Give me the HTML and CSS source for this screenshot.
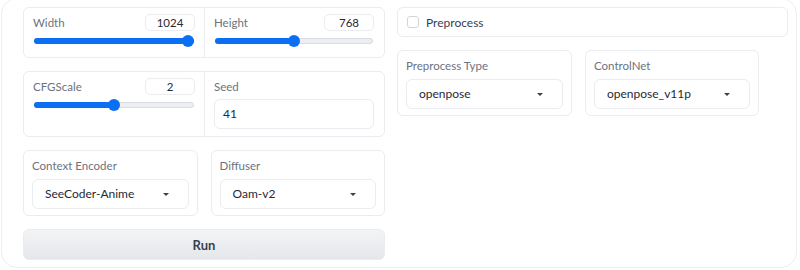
FILE: index.html
```html
<!DOCTYPE html>
<html lang="en">
<head>
<meta charset="UTF-8">
<meta name="viewport" content="width=device-width, initial-scale=1.0">
<title>SeeCoder</title>
<link rel="stylesheet" href="styles.css">
</head>
<body>

<div class="app">
    <div class="left">
        <div class="panel split">
            <div class="field">
                <div class="head">
                    <span class="label">Width</span>
                    <span class="num">1024</span>
                </div>
                <div class="slider">
                    <div class="fill" style="width:100%"></div>
                    <div class="thumb" style="left:100%"></div>
                </div>
            </div>
            <div class="field">
                <div class="head">
                    <span class="label">Height</span>
                    <span class="num">768</span>
                </div>
                <div class="slider">
                    <div class="fill" style="width:50%"></div>
                    <div class="thumb" style="left:50%"></div>
                </div>
            </div>
        </div>

        <div class="panel split">
            <div class="field">
                <div class="head">
                    <span class="label">CFGScale</span>
                    <span class="num">2</span>
                </div>
                <div class="slider">
                    <div class="fill" style="width:50%"></div>
                    <div class="thumb" style="left:50%"></div>
                </div>
            </div>
            <div class="field">
                <div class="head">
                    <span class="label">Seed</span>
                </div>
                <div class="textbox">41</div>
            </div>
        </div>

        <div class="pair">
            <div class="panel drop-panel">
                <div class="label">Context Encoder</div>
                <div class="dropdown">SeeCoder-Anime <span class="caret"></span></div>
            </div>
            <div class="panel drop-panel">
                <div class="label">Diffuser</div>
                <div class="dropdown">Oam-v2 <span class="caret"></span></div>
            </div>
        </div>

        <button class="run">Run</button>
    </div>

    <div class="right">
        <div class="panel check-panel">
            <span class="box"></span>
            <span class="check-label">Preprocess</span>
        </div>
        <div class="pair pair-right">
            <div class="panel drop-panel">
                <div class="label">Preprocess Type</div>
                <div class="dropdown">openpose <span class="caret"></span></div>
            </div>
            <div class="panel drop-panel">
                <div class="label">ControlNet</div>
                <div class="dropdown">openpose_v11p <span class="caret"></span></div>
            </div>
        </div>
    </div>
</div>

</body>
</html>
```

FILE: styles.css
```css
body {
    font-family: Lato, "Open Sans", sans-serif;
    margin: 0;
    padding: 0;
    background: #fff;
    overflow: hidden;
}
.app {
    box-sizing: border-box;
    height: 270px;
    margin: -2px 3px 0 1px;
    padding: 8px 8px 0 21px;
    border: 1px solid #eeeeee;
    border-radius: 16px;
    display: grid;
    grid-template-columns: 362px 1fr;
    column-gap: 12px;
    align-items: start;
}
.left,
.right {
    display: flex;
    flex-direction: column;
    gap: 13px;
}
.panel {
    box-sizing: border-box;
    border: 1px solid #eaecef;
    border-radius: 6px;
    background: #fff;
}
.split {
    display: grid;
    grid-template-columns: 1fr 1fr;
}
.split .field + .field {
    border-left: 1px solid #eaecef;
}
.field {
    padding: 6px 10px 10px 9px;
}
.split .field:first-child {
    padding-right: 9px;
}
.head {
    display: flex;
    justify-content: space-between;
    align-items: center;
    height: 17px;
}
.label {
    font-size: 11.5px;
    color: #6b7280;
    line-height: 17px;
}
.num {
    box-sizing: border-box;
    width: 50px;
    height: 17px;
    border: 1px solid #eaecef;
    border-radius: 5px;
    font-size: 11.5px;
    line-height: 15px;
    text-align: center;
    color: #1f2937;
}
.slider {
    position: relative;
    margin: 4px 1px 0 1px;
    height: 12px;
}
.slider::before {
    content: "";
    position: absolute;
    left: 0;
    right: 0;
    top: 3px;
    height: 6px;
    box-sizing: border-box;
    border: 1px solid #d8dbe0;
    border-radius: 3px;
    background: #eceef1;
}
.fill {
    position: absolute;
    left: 0;
    top: 3px;
    height: 6px;
    border-radius: 3px;
    background: #0b6ff4;
}
.thumb {
    position: absolute;
    top: 0;
    width: 12px;
    height: 12px;
    margin-left: -6px;
    border-radius: 50%;
    background: #0b6ff4;
}
.slider .fill[style*="100%"] + .thumb {
    margin-left: -12px;
}
.textbox {
    box-sizing: border-box;
    margin-top: 4px;
    height: 30px;
    padding: 0 8px;
    border: 1px solid #eaecef;
    border-radius: 6px;
    font-size: 12px;
    line-height: 28px;
    color: #1f2937;
}
.split .field:last-child {
    padding-bottom: 7px;
}
.pair {
    display: grid;
    grid-template-columns: 1fr 1fr;
    gap: 13px;
}
.pair-right {
    grid-template-columns: 175px 174px;
}
.drop-panel {
    padding: 6px 8px 6px 8px;
}
.dropdown {
    box-sizing: border-box;
    margin-top: 5px;
    height: 30px;
    padding: 0 12px;
    border: 1px solid #eaecef;
    border-radius: 6px;
    font-size: 12px;
    line-height: 28px;
    color: #1f2937;
    display: flex;
    justify-content: space-between;
    align-items: center;
}
.caret {
    width: 0;
    height: 0;
    margin-right: 7px;
    border-left: 3px solid transparent;
    border-right: 3px solid transparent;
    border-top: 3px solid #374151;
}
.run {
    box-sizing: border-box;
    height: 31px;
    width: 100%;
    border: 1px solid #eaecef;
    border-radius: 6px;
    background: linear-gradient(to bottom, #f3f4f6, #e5e7eb);
    font-family: inherit;
    font-size: 13px;
    font-weight: bold;
    color: #374151;
}
.check-panel {
    height: 30px;
    padding: 0 9px;
    display: flex;
    align-items: center;
    gap: 7px;
}
.box {
    box-sizing: border-box;
    width: 12px;
    height: 12px;
    border: 1px solid #d1d5db;
    border-radius: 3px;
}
.check-label {
    font-size: 12px;
    color: #374151;
}
```
